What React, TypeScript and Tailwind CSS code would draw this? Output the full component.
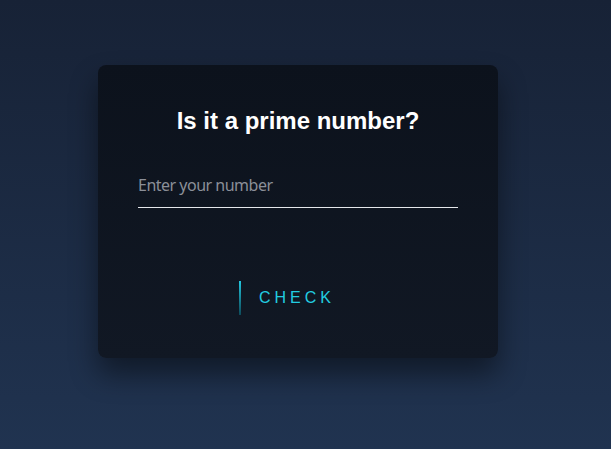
import React from "react";

export default function App() {
  return (
    <div className="min-h-[449px] w-full bg-gradient-to-b from-[#172236] to-[#203350] flex justify-center pt-[65px] pr-[15px]">
      <div className="w-[400px] h-[293px] rounded-lg bg-gradient-to-b from-[#0c121c] to-[#111824] shadow-[0_16px_28px_rgba(0,0,0,0.45)] flex flex-col items-center pt-[42px] px-[40px]">
        <h1 className="text-[24px] leading-[28px] font-bold text-white font-['Liberation_Sans',Arial,sans-serif]">
          Is it a prime number?
        </h1>
        <div className="w-[320px] mt-[38px]">
          <input
            type="text"
            placeholder="Enter your number"
            className="w-full bg-transparent border-0 border-b border-[#e5e7eb] outline-none pb-[10px] text-[16px] leading-[24px] tracking-[-0.5px] text-white placeholder:text-[#8b8f98] font-['Noto_Sans',sans-serif]"
          />
        </div>
        <div className="mt-[73px] flex items-center mr-[22px]">
          <span className="w-[2px] h-[34px] bg-gradient-to-b from-[#22c8e0] to-[#0d4a5a]" />
          <span className="ml-[18px] text-[16px] tracking-[4px] text-[#22cce0] font-['Liberation_Sans',Arial,sans-serif]">
            CHECK
          </span>
        </div>
      </div>
    </div>
  );
}
